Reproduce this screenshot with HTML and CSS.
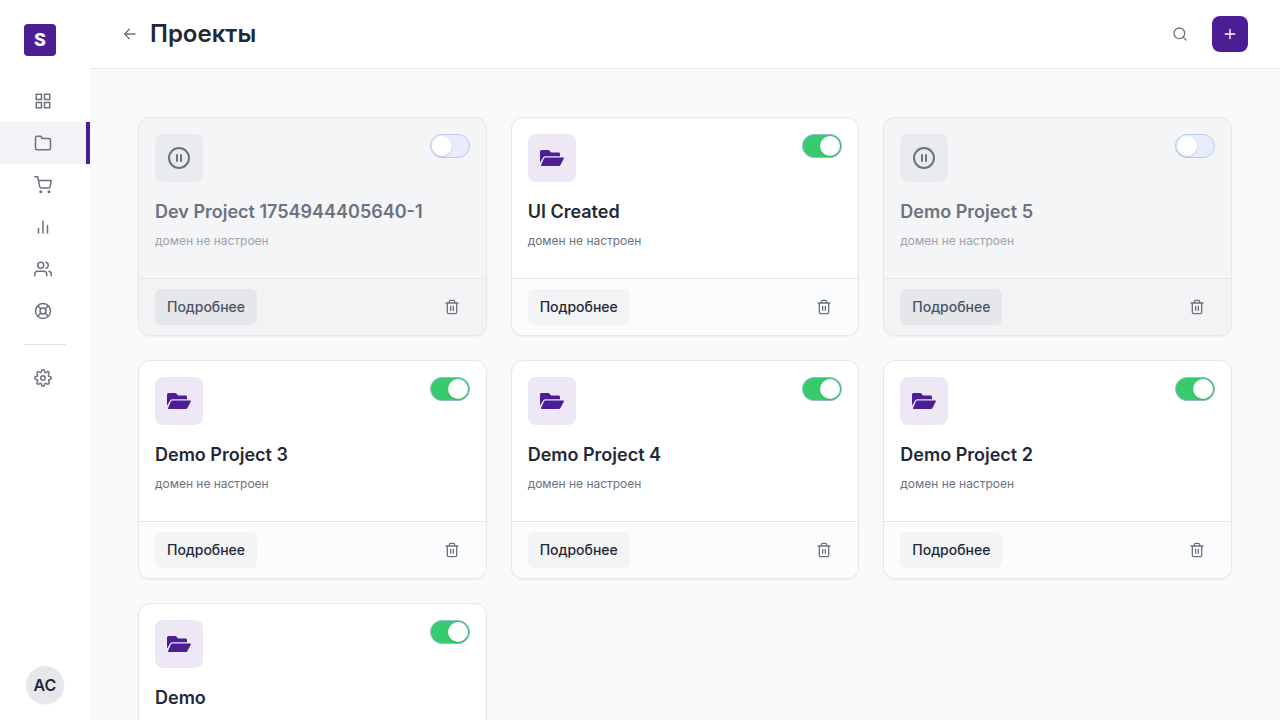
FILE: index.html
```html
<!DOCTYPE html>
<html lang="ru">
<head>
<meta charset="utf-8">
<title>Проекты</title>
<link rel="stylesheet" href="styles.css">
</head>
<body>
<svg class="sprite" aria-hidden="true">
  <symbol id="grid" viewBox="0 0 24 24"><rect x="3" y="3" width="7" height="7"/><rect x="14" y="3" width="7" height="7"/><rect x="14" y="14" width="7" height="7"/><rect x="3" y="14" width="7" height="7"/></symbol>
  <symbol id="folder" viewBox="0 0 24 24"><path d="M22 19a2 2 0 0 1-2 2H4a2 2 0 0 1-2-2V5a2 2 0 0 1 2-2h5l2 3h9a2 2 0 0 1 2 2z"/></symbol>
  <symbol id="cart" viewBox="0 0 24 24"><circle cx="9" cy="21" r="1"/><circle cx="20" cy="21" r="1"/><path d="M1 1h4l2.68 13.39a2 2 0 0 0 2 1.61h9.72a2 2 0 0 0 2-1.61L23 6H6"/></symbol>
  <symbol id="chart" viewBox="0 0 24 24"><path d="M18 20V10M12 20V4M6 20v-6"/></symbol>
  <symbol id="users" viewBox="0 0 24 24"><path d="M17 21v-2a4 4 0 0 0-4-4H5a4 4 0 0 0-4 4v2"/><circle cx="9" cy="7" r="4"/><path d="M23 21v-2a4 4 0 0 0-3-3.87M16 3.13a4 4 0 0 1 0 7.75"/></symbol>
  <symbol id="help" viewBox="0 0 24 24"><circle cx="12" cy="12" r="10"/><circle cx="12" cy="12" r="4"/><path d="M4.93 4.93l4.24 4.24M14.83 14.83l4.24 4.24M14.83 9.17l4.24-4.24M4.93 19.07l4.24-4.24"/></symbol>
  <symbol id="gear" viewBox="0 0 24 24"><circle cx="12" cy="12" r="3"/><path d="M19.4 15a1.65 1.65 0 0 0 .33 1.82l.06.06a2 2 0 0 1-2.83 2.83l-.06-.06a1.65 1.65 0 0 0-2.8 1.17V21a2 2 0 0 1-4 0v-.09A1.65 1.65 0 0 0 7.3 19.65l-.06.06a2 2 0 0 1-2.83-2.83l.06-.06A1.65 1.65 0 0 0 3.09 14H3a2 2 0 0 1 0-4h.09A1.65 1.65 0 0 0 4.6 7.4l-.2-.28a2 2 0 0 1 2.83-2.83l.06.06A1.65 1.65 0 0 0 10 3.09V3a2 2 0 0 1 4 0v.09a1.65 1.65 0 0 0 2.82 1.18l.06-.06a2 2 0 0 1 2.83 2.83l-.06.06A1.65 1.65 0 0 0 20.91 10H21a2 2 0 0 1 0 4h-.09a1.65 1.65 0 0 0-1.51 1z"/></symbol>
  <symbol id="back" viewBox="0 0 24 24"><path d="M19.5 12H4M11 19l-7-7 7-7"/></symbol>
  <symbol id="search" viewBox="0 0 24 24"><circle cx="11" cy="11" r="8"/><path d="M21 21l-4.35-4.35"/></symbol>
  <symbol id="plus" viewBox="0 0 24 24"><path d="M12 5v14M5 12h14"/></symbol>
  <symbol id="trash" viewBox="0 0 24 24"><path d="M3 6h18M19 6v14a2 2 0 0 1-2 2H7a2 2 0 0 1-2-2V6m3 0V4a2 2 0 0 1 2-2h4a2 2 0 0 1 2 2v2M10 11v6M14 11v6"/></symbol>
  <symbol id="pause" viewBox="0 0 24 24"><circle cx="12" cy="12" r="10"/><path d="M10 9v6M14 9v6"/></symbol>
  <symbol id="open" viewBox="0 0 24 24"><path d="M0 5.5Q0 4 1.5 4H8.2Q9 4 9.6 4.7L11 6.5H18.6Q20 6.5 20 7.9V10.3H5.4Q3.9 10.3 3.1 11.6L0 16.8Z"/><path d="M5.6 11.4H23.2Q24.3 11.4 23.8 12.4L20.6 18.8Q20 20 18.7 20H1.7Q.6 20 1.1 19L3.9 12.5Q4.4 11.4 5.6 11.4Z"/></symbol>
</svg>
<div class="app">
  <aside class="sidebar">
    <div class="logo">S</div>
    <nav class="nav">
      <a class="nav-item"><svg class="icon"><use href="#grid"/></svg></a>
      <a class="nav-item active"><svg class="icon"><use href="#folder"/></svg></a>
      <a class="nav-item"><svg class="icon"><use href="#cart"/></svg></a>
      <a class="nav-item"><svg class="icon"><use href="#chart"/></svg></a>
      <a class="nav-item"><svg class="icon"><use href="#users"/></svg></a>
      <a class="nav-item"><svg class="icon"><use href="#help"/></svg></a>
      <div class="separator"></div>
      <a class="nav-item"><svg class="icon"><use href="#gear"/></svg></a>
    </nav>
    <div class="avatar">AC</div>
  </aside>
  <main class="main">
    <header class="header">
      <svg class="icon small"><use href="#back"/></svg>
      <h1 class="title">Проекты</h1>
      <svg class="icon small search"><use href="#search"/></svg>
      <button class="add"><svg class="icon small"><use href="#plus"/></svg></button>
    </header>
    <section class="projects">
      <article class="card off">
        <div class="card-body"><div class="card-top"><div class="badge"><svg class="icon large"><use href="#pause"/></svg></div><div class="toggle"></div></div><h2 class="name">Dev Project 1754944405640-1</h2><p class="domain">домен не настроен</p></div>
        <div class="card-foot"><button class="more">Подробнее</button><svg class="icon small"><use href="#trash"/></svg></div>
      </article>
      <article class="card">
        <div class="card-body"><div class="card-top"><div class="badge"><svg class="folder-icon"><use href="#open"/></svg></div><div class="toggle on"></div></div><h2 class="name">UI Created</h2><p class="domain">домен не настроен</p></div>
        <div class="card-foot"><button class="more">Подробнее</button><svg class="icon small"><use href="#trash"/></svg></div>
      </article>
      <article class="card off">
        <div class="card-body"><div class="card-top"><div class="badge"><svg class="icon large"><use href="#pause"/></svg></div><div class="toggle"></div></div><h2 class="name">Demo Project 5</h2><p class="domain">домен не настроен</p></div>
        <div class="card-foot"><button class="more">Подробнее</button><svg class="icon small"><use href="#trash"/></svg></div>
      </article>
      <article class="card">
        <div class="card-body"><div class="card-top"><div class="badge"><svg class="folder-icon"><use href="#open"/></svg></div><div class="toggle on"></div></div><h2 class="name">Demo Project 3</h2><p class="domain">домен не настроен</p></div>
        <div class="card-foot"><button class="more">Подробнее</button><svg class="icon small"><use href="#trash"/></svg></div>
      </article>
      <article class="card">
        <div class="card-body"><div class="card-top"><div class="badge"><svg class="folder-icon"><use href="#open"/></svg></div><div class="toggle on"></div></div><h2 class="name">Demo Project 4</h2><p class="domain">домен не настроен</p></div>
        <div class="card-foot"><button class="more">Подробнее</button><svg class="icon small"><use href="#trash"/></svg></div>
      </article>
      <article class="card">
        <div class="card-body"><div class="card-top"><div class="badge"><svg class="folder-icon"><use href="#open"/></svg></div><div class="toggle on"></div></div><h2 class="name">Demo Project 2</h2><p class="domain">домен не настроен</p></div>
        <div class="card-foot"><button class="more">Подробнее</button><svg class="icon small"><use href="#trash"/></svg></div>
      </article>
      <article class="card">
        <div class="card-body"><div class="card-top"><div class="badge"><svg class="folder-icon"><use href="#open"/></svg></div><div class="toggle on"></div></div><h2 class="name">Demo</h2></div>
      </article>
    </section>
  </main>
</div>
</body>
</html>
```
FILE: styles.css
```css
* { box-sizing: border-box; }
body { margin: 0; font-family: Inter, sans-serif; color: #1f2937; background: #f9fafc; }
h1, h2, p { margin: 0; }
button { border: 0; font-family: inherit; }
.sprite { display: none; }
.app { display: flex; height: 720px; overflow: hidden; }
.icon { width: 18px; height: 18px; flex: none; fill: none; stroke: #6b7280; stroke-width: 2; stroke-linecap: round; stroke-linejoin: round; }
.icon.small { width: 16px; height: 16px; }
.icon.large { width: 24px; height: 24px; }

.sidebar { width: 90px; flex: none; background: #fff; display: flex; flex-direction: column; padding: 24px 0 16px; }
.logo { width: 32px; height: 32px; margin-left: 24px; padding-bottom: 1px; border-radius: 4px; background: #4c1d95; color: #fff; font-family: Roboto, Inter, sans-serif; font-size: 19px; font-weight: 900; display: flex; align-items: center; justify-content: center; }
.nav { margin-top: 24px; flex: 1; }
.nav-item { height: 42px; display: flex; align-items: center; justify-content: center; border-right: 4px solid transparent; }
.nav-item.active { background: #f5f2f9; border-color: #4c1d95; }
.separator { height: 1px; margin: 12px 24px; background: #e0e3e8; }
.avatar { width: 38px; height: 38px; margin: 0 auto; border-radius: 50%; background: #e5e7eb; box-shadow: 0 1px 2px rgba(0,0,0,.05); font-size: 16px; font-weight: 600; display: flex; align-items: center; justify-content: center; }

.main { flex: 1; min-width: 0; }
.header { height: 69px; background: #fff; border-bottom: 1px solid #e5e7eb; display: flex; align-items: center; padding: 0 32px; }
.title { margin-left: 12px; font-size: 24px; line-height: 32px; font-weight: 600; padding-bottom: 1px; }
.search { margin-left: auto; margin-right: 24px; }
.add { width: 36px; height: 36px; padding: 0; border-radius: 8px; background: #4c1d95; display: flex; align-items: center; justify-content: center; }
.add .icon { stroke: #fff; }

.projects { display: grid; grid-template-columns: repeat(3, 1fr); gap: 24px; padding: 48px; }
.card { height: 219px; display: flex; flex-direction: column; background: #fff; border: 1px solid #e5e7eb; border-radius: 12px; box-shadow: 0 1px 2px rgba(0,0,0,.05); overflow: hidden; }
.card-body { flex: 1; padding: 16px; }
.card-top { display: flex; justify-content: space-between; align-items: flex-start; }
.badge { width: 48px; height: 48px; border-radius: 8px; background: #ede8f4; display: flex; align-items: center; justify-content: center; }
.folder-icon { width: 24px; height: 24px; fill: #4c1d95; }
.toggle { width: 40px; height: 24px; border: 1px solid #bac8fb; border-radius: 12px; background: #e8edfb; display: flex; padding: 1px; }
.toggle::before { content: ""; width: 20px; height: 20px; border-radius: 50%; background: #fff; box-shadow: 0 1px 2px rgba(0,0,0,.15); }
.toggle.on { background: #38cb6e; border-color: #93bdcc; justify-content: flex-end; }
.name { margin-top: 16px; font-size: 18px; line-height: 28px; font-weight: 600; white-space: nowrap; }
.domain { margin-top: 6px; font-size: 12px; line-height: 18px; letter-spacing: -.02px; color: #6b7280; }
.card-foot { height: 57px; border-top: 1px solid #e5e7eb; background: #fbfcfe; padding: 0 26px 0 16px; display: flex; align-items: center; justify-content: space-between; }
.more { height: 36px; padding: 0 12px 1px; border-radius: 6px; background: #f3f4f6; color: #1f2937; font-size: 14px; font-weight: 500; letter-spacing: -.02px; }
.off { background: #f4f5f7; }
.off .badge { background: #eaebee; }
.off .name { color: #6b7280; }
.off .domain { color: #9ca3af; }
.off .card-foot { background: #f3f3f5; }
.off .more { background: #e5e7eb; color: #4b5563; }
```
